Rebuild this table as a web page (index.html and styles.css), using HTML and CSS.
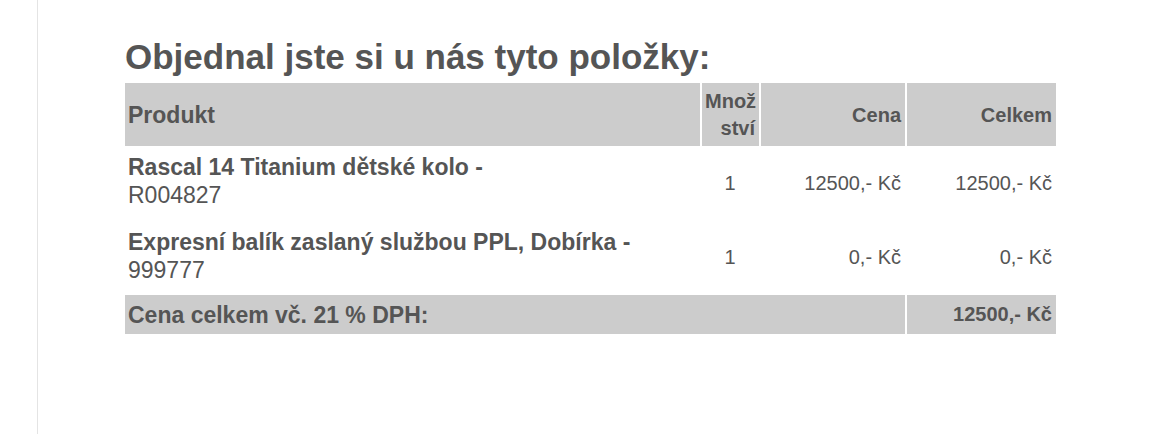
FILE: index.html
```html
<!DOCTYPE html>
<html lang="cs">
<head>
<meta charset="utf-8">
<title>Objednávka</title>
<link rel="stylesheet" href="styles.css">
</head>
<body>
<div class="frame">
  <div class="content">
    <h2 class="title">Objednal jste si u nás tyto položky:</h2>
    <table class="items">
      <colgroup>
        <col class="c-prod">
        <col class="c-qty">
        <col class="c-price">
        <col class="c-total">
      </colgroup>
      <thead>
        <tr>
          <th class="prod">Produkt</th>
          <th class="qty">Množ ství</th>
          <th class="num">Cena</th>
          <th class="num">Celkem</th>
        </tr>
      </thead>
      <tbody>
        <tr>
          <td class="prod"><strong>Rascal 14 Titanium dětské kolo -</strong><br>R004827</td>
          <td class="qty">1</td>
          <td class="num">12500,- Kč</td>
          <td class="num">12500,- Kč</td>
        </tr>
        <tr>
          <td class="prod"><strong>Expresní balík zaslaný službou PPL, Dobírka -</strong><br>999777</td>
          <td class="qty">1</td>
          <td class="num">0,- Kč</td>
          <td class="num">0,- Kč</td>
        </tr>
      </tbody>
      <tfoot>
        <tr>
          <th class="prod" colspan="3">Cena celkem vč. 21 % DPH:</th>
          <th class="num">12500,- Kč</th>
        </tr>
      </tfoot>
    </table>
  </div>
</div>
</body>
</html>
```

FILE: styles.css
```css
html, body {
  margin: 0;
  padding: 0;
  background: #ffffff;
}

body {
  font-family: "Liberation Sans", Arial, Helvetica, sans-serif;
  color: #555555;
}

.frame {
  margin-left: 37px;
  border-left: 1px solid #e4e4e4;
  height: 434px;
  box-sizing: border-box;
  padding-left: 87px;
  padding-top: 37px;
}

.content {
  width: 931px;
}

.title {
  margin: 0;
  font-size: 35px;
  line-height: 40px;
  font-weight: bold;
  color: #555555;
  padding-bottom: 6px;
}

.items {
  width: 100%;
  border-collapse: collapse;
  table-layout: fixed;
}

.c-prod { width: 576px; }
.c-qty { width: 59px; }
.c-price { width: 146px; }
.c-total { width: 150px; }

.items th,
.items td {
  padding: 8px 4px 8px 3px;
  vertical-align: middle;
  font-size: 20px;
  line-height: 27px;
}

.items td + td,
.items th + th {
  border-left: 2px solid #ffffff;
}

.items thead th,
.items tfoot th {
  background: #cccccc;
  font-weight: bold;
}

.items thead th {
  padding-top: 5px;
  padding-bottom: 4px;
  line-height: 27px;
}

.items .prod {
  text-align: left;
  font-size: 23px;
  line-height: 28px;
}

.items td.prod strong {
  font-weight: bold;
}

.items td.prod {
  padding-top: 7px;
  padding-bottom: 11.5px;
}

.items .qty {
  text-align: center;
}

.items thead .qty {
  text-align: right;
  word-spacing: 100px;
}

.items .num {
  text-align: right;
}

.items tfoot th {
  padding-top: 5.5px;
  padding-bottom: 5px;
}
```
